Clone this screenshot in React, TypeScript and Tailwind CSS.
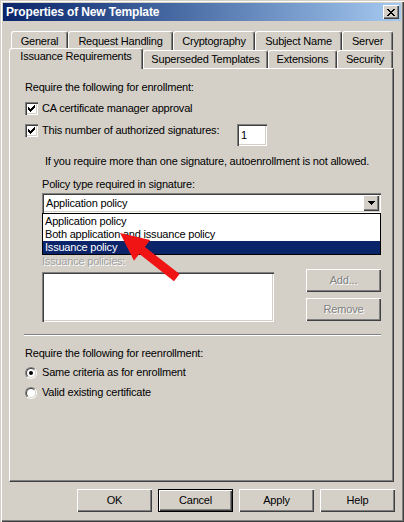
import React from "react";

const raised = "shadow-[inset_1px_1px_0_#fff,inset_-1px_-1px_0_#404040,inset_-2px_-2px_0_#808080]";
const sunken = "shadow-[inset_1px_1px_0_#808080,inset_2px_2px_0_#404040,inset_-1px_-1px_0_#fff,inset_-2px_-2px_0_#d4d0c8]";
const disabled = "text-[#808080] [text-shadow:1px_1px_0_#fff]";

function Pix({ rows, color = "#000" }: { rows: string[]; color?: string }) {
  return (
    <svg width={rows[0].length} height={rows.length} shapeRendering="crispEdges" className="block">
      {rows.flatMap((r, y) =>
        [...r].map((c, x) =>
          c === "x" ? <rect key={`${x}-${y}`} x={x} y={y} width={1} height={1} fill={color} /> : null
        )
      )}
    </svg>
  );
}

const closeX = ["xx....xx", ".xx..xx.", "..xxxx..", "...xx...", "..xxxx..", ".xx..xx.", "xx....xx"];
const check = ["......x", ".....xx", "x...xxx", "xx.xxx.", "xxxxx..", ".xxx...", "..x...."];
const arrowDown = ["xxxxxxx", ".xxxxx.", "..xxx..", "...x..."];

function CheckBox() {
  return (
    <div className={`w-[13px] h-[13px] bg-white flex items-center justify-center shrink-0 ${sunken}`}>
      <Pix rows={check} />
    </div>
  );
}

function Radio({ on }: { on?: boolean }) {
  return (
    <div className="w-[12px] h-[12px] rounded-full border border-t-[#808080] border-l-[#808080] border-b-white border-r-white shrink-0">
      <div className="w-full h-full rounded-full border border-t-[#404040] border-l-[#404040] border-b-[#d4d0c8] border-r-[#d4d0c8] bg-white flex items-center justify-center">
        {on && <div className="w-[4px] h-[4px] rounded-full bg-black" />}
      </div>
    </div>
  );
}

function Btn({ label, off, def }: { label: string; off?: boolean; def?: boolean }) {
  return (
    <div className={`w-[75px] h-[23px] ${def ? "border border-black" : ""}`}>
      <div className={`w-full h-full flex items-center justify-center ${raised} ${off ? disabled : ""}`}>{label}</div>
    </div>
  );
}

const row1 = [
  { t: "General", w: "w-[57px]" },
  { t: "Request Handling", w: "w-[105px]" },
  { t: "Cryptography", w: "w-[82px]" },
  { t: "Subject Name", w: "w-[87px]" },
  { t: "Server", w: "w-[51px]" },
];
const row2 = [
  { t: "Superseded Templates", w: "w-[125px]" },
  { t: "Extensions", w: "w-[69px]" },
  { t: "Security", w: "w-[56px]" },
];

const tabBase =
  "flex justify-center border-l border-t border-r border-white border-r-[#404040] rounded-t-[3px] shadow-[inset_-1px_0_0_#808080] bg-[#d4d0c8] whitespace-nowrap";

export default function App() {
  return (
    <div className="relative w-[404px] h-[522px] overflow-hidden bg-[#d4d0c8] text-black text-[11px] leading-[13px] tracking-[-0.2px] font-['Liberation_Sans',Arial,sans-serif] shadow-[inset_1px_1px_0_#d4d0c8,inset_2px_2px_0_#fff,inset_-1px_-1px_0_#404040,inset_-2px_-2px_0_#808080]">
      {/* title bar */}
      <div className="mx-[3px] mt-[3px] h-[18px] flex items-center pl-[3px] pr-[2px] bg-linear-to-r from-[#0a246a] to-[#a6caf0]">
        <span className="flex-1 text-white font-bold text-[12px] tracking-[-0.15px]">Properties of New Template</span>
        <div className={`w-[16px] h-[14px] bg-[#d4d0c8] flex items-center justify-center ${raised}`}>
          <Pix rows={closeX} />
        </div>
      </div>

      {/* tabs */}
      <div className="mt-[10px] ml-[11px] flex h-[19px]">
        {row1.map((r) => (
          <div key={r.t} className={`${r.w} h-[19px] pt-[3px] ${tabBase}`}>{r.t}</div>
        ))}
      </div>
      <div className="ml-[9px] flex h-[18px] items-end relative z-10">
        <div className={`w-[134px] h-[21px] -mb-px pt-[1px] ${tabBase}`}>Issuance Requirements</div>
        {row2.map((r) => (
          <div key={r.t} className={`${r.w} h-[18px] pt-[2px] ${tabBase}`}>{r.t}</div>
        ))}
      </div>

      {/* panel */}
      <div className="ml-[9px] w-[385px] h-[414px] border border-white border-r-[#404040] border-b-[#404040] shadow-[inset_-1px_-1px_0_#808080] flex flex-col items-start">
        <div className="ml-[15px] mt-[12px]">Require the following for enrollment:</div>
        <div className="ml-[15px] mt-[8px] flex items-center gap-[4px] h-[13px]">
          <CheckBox />
          <span>CA certificate manager approval</span>
        </div>
        <div className="ml-[15px] mt-[9px] flex items-start h-[22px]">
          <div className="w-[212px] flex items-center gap-[4px] h-[13px]">
            <CheckBox />
            <span>This number of authorized signatures:</span>
          </div>
          <div className={`w-[30px] h-[22px] bg-white pl-[4px] flex items-center ${sunken}`}>1</div>
        </div>
        <div className="ml-[35px] mt-[9px]">If you require more than one signature, autoenrollment is not allowed.</div>
        <div className="ml-[32px] mt-[10px]">Policy type required in signature:</div>
        <div className={`relative ml-[32px] mt-[2px] w-[339px] h-[20px] bg-white flex items-center ${sunken}`}>
          <span className="flex-1 pl-[4px]">Application policy</span>
          <div className={`w-[16px] h-[16px] mr-[2px] bg-[#d4d0c8] flex items-center justify-center ${raised}`}>
            <Pix rows={arrowDown} />
          </div>
          <div className="absolute left-0 top-full w-[339px] border border-black bg-white pt-px z-20">
            <div className="h-[13px] pl-[2px]">Application policy</div>
            <div className="h-[13px] pl-[2px]">Both application and issuance policy</div>
            <div className="h-[13px] pl-[2px] bg-[#0a246a] text-white">Issuance policy</div>
          </div>
        </div>
        <div className="ml-[32px] mt-[42px] text-[#a0a0a0] [text-shadow:1px_1px_0_#fff]">Issuance policies:</div>
        <div className="ml-[32px] mt-[1px] flex items-start">
          <div className={`mt-[3px] w-[232px] h-[50px] bg-white ${sunken}`} />
          <div className="ml-[32px] flex flex-col gap-[6px]">
            <Btn label="Add..." off />
            <Btn label="Remove" off />
          </div>
        </div>
        <div className="ml-[14px] mt-[12px] w-[357px] border-t border-b border-t-[#808080] border-b-white" />
        <div className="ml-[15px] mt-[11px]">Require the following for reenrollment:</div>
        <div className="ml-[15px] mt-[6px] flex items-center gap-[5px] h-[13px]">
          <Radio on />
          <span>Same criteria as for enrollment</span>
        </div>
        <div className="ml-[15px] mt-[7px] flex items-center gap-[5px] h-[13px]">
          <Radio />
          <span>Valid existing certificate</span>
        </div>
      </div>

      {/* dialog buttons */}
      <div className="mt-[7px] ml-[77px] flex gap-[6px]">
        <Btn label="OK" />
        <Btn label="Cancel" def />
        <Btn label="Apply" />
        <Btn label="Help" />
      </div>

      {/* annotation arrow */}
      <svg className="absolute left-0 top-0 pointer-events-none z-30" width={404} height={522}>
        <polygon
          fill="#f01414"
          points="120,233 150.2,240.1 144.9,246.9 179.6,274.1 174,281.2 139.3,253.9 134,260.7"
        />
      </svg>
    </div>
  );
}
